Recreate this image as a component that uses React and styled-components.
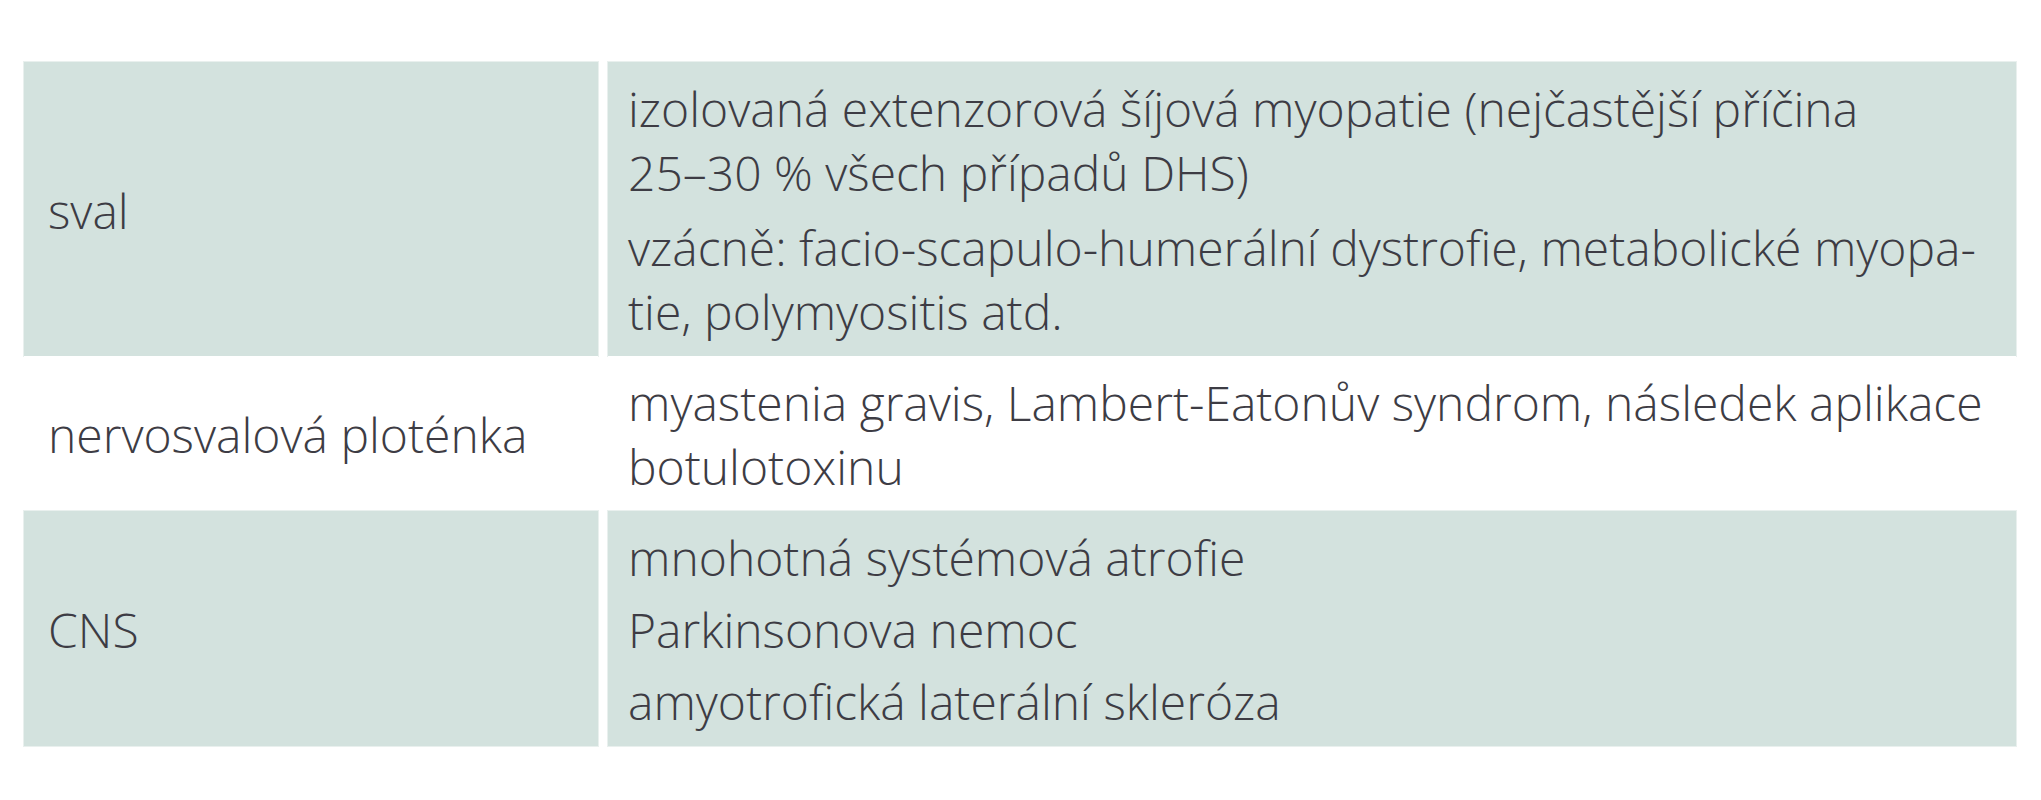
import React from "react";
import styled, { createGlobalStyle } from "styled-components";

const GlobalStyle = createGlobalStyle`
  html, body {
    margin: 0;
    padding: 0;
    background: #ffffff;
  }
  body {
    font-family: "Open Sans", "Noto Sans", sans-serif;
  }
`;

const Page = styled.div`
  width: 2041px;
  height: 800px;
  padding: 62px 0 0 24px;
  box-sizing: border-box;
  background: #ffffff;
`;

const Table = styled.div`
  display: flex;
  flex-direction: column;
  width: 1992px;
`;

const Row = styled.div`
  display: grid;
  grid-template-columns: 574px 1408px;
  column-gap: 10px;
`;

const Cell = styled.div`
  box-sizing: border-box;
  padding: 15px 20px 12px 20px;
  background: ${(p) => (p.$shaded ? "#d3e2de" : "#ffffff")};
  box-shadow: ${(p) => (p.$shaded ? "0 0 0 1px #e9f0ee" : "none")};
  color: #3d3c44;
  font-family: "Open Sans", "Noto Sans", sans-serif;
  font-weight: 300;
  font-size: 48px;
  line-height: 64px;
  white-space: nowrap;
`;

const LabelCell = styled(Cell)`
  display: flex;
  align-items: center;
  padding-left: 24px;
`;

const BodyCell = styled(Cell)`
  display: flex;
  flex-direction: column;
  gap: ${(p) => p.$gap}px;
  padding-left: 20px;
`;

const Para = styled.p`
  margin: 0;
`;

const rows = [
  {
    label: "sval",
    shaded: true,
    gap: 11,
    paras: [
      ["izolovaná extenzorová šíjová myopatie (nejčastější příčina", "25–30 % všech případů DHS)"],
      ["vzácně: facio-scapulo-humerální dystrofie, metabolické myopa-", "tie, polymyositis atd."],
    ],
  },
  {
    label: "nervosvalová ploténka",
    shaded: false,
    gap: 10,
    paras: [["myastenia gravis, Lambert-Eatonův syndrom, následek aplikace", "botulotoxinu"]],
  },
  {
    label: "CNS",
    shaded: true,
    gap: 8,
    paras: [["mnohotná systémová atrofie"], ["Parkinsonova nemoc"], ["amyotrofická laterální skleróza"]],
  },
];

export default function App() {
  return (
    <>
      <GlobalStyle />
      <Page>
        <Table>
          {rows.map((r) => (
            <Row key={r.label}>
              <LabelCell $shaded={r.shaded}>{r.label}</LabelCell>
              <BodyCell $shaded={r.shaded} $gap={r.gap}>
                {r.paras.map((lines, i) => (
                  <Para key={i}>
                    {lines.map((l, j) => (
                      <React.Fragment key={j}>
                        {j > 0 && <br />}
                        {l}
                      </React.Fragment>
                    ))}
                  </Para>
                ))}
              </BodyCell>
            </Row>
          ))}
        </Table>
      </Page>
    </>
  );
}
